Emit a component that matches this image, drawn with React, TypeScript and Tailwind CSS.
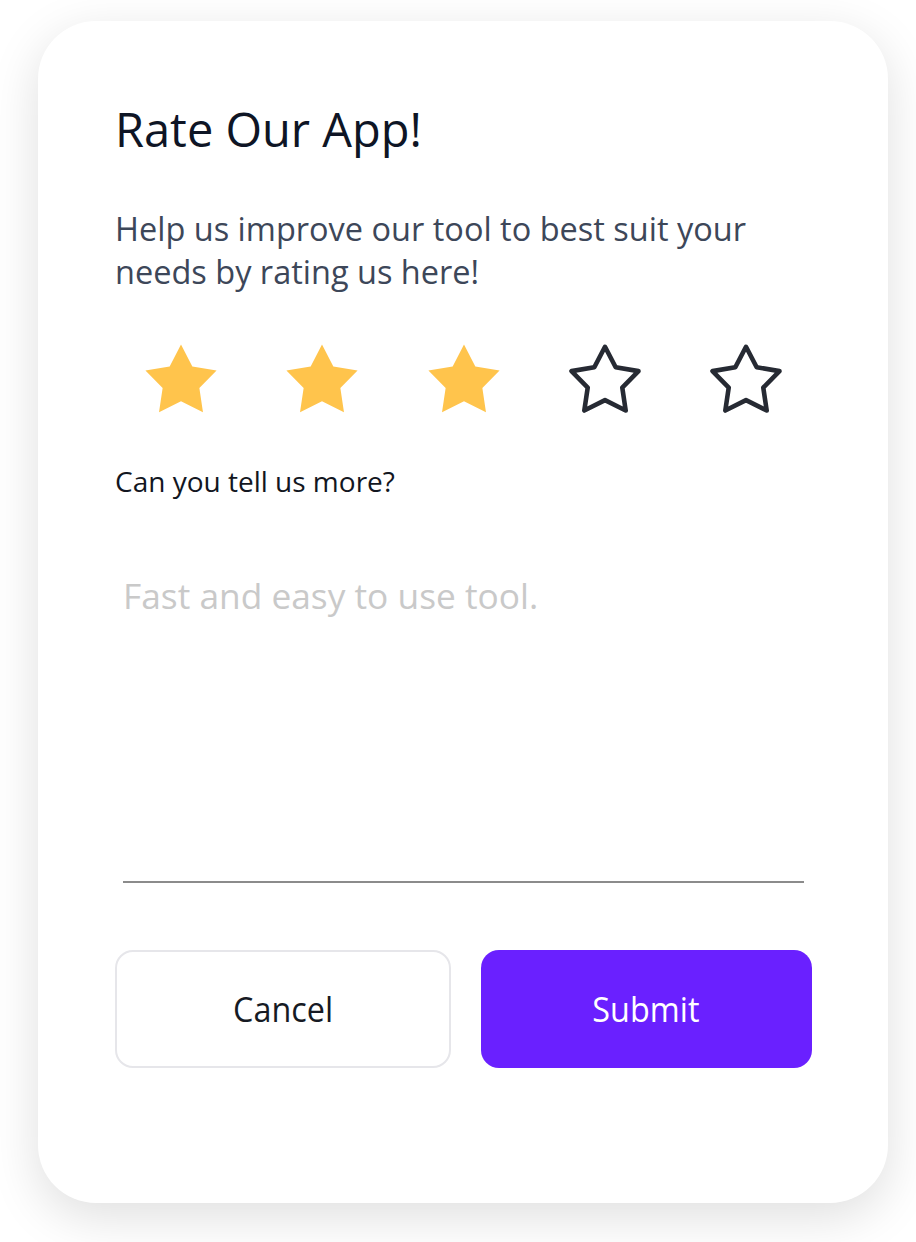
import React from "react";

const STAR_POINTS =
  "0,-37.4 11.34,-15.61 35.57,-11.56 18.36,5.96 21.98,30.26 0,19.3 -21.98,30.26 -18.36,5.96 -35.57,-11.56 -11.34,-15.61";

const OUTLINE_POINTS =
  "0,-35.2 10.67,-14.69 33.48,-10.88 17.28,5.61 20.69,28.48 0,18.17 -20.69,28.48 -17.28,5.61 -33.48,-10.88 -10.67,-14.69";

function Star({ filled }: { filled: boolean }) {
  return (
    <svg width="72" height="69" viewBox="-36 -38 72 69" aria-hidden="true">
      {filled ? (
        <polygon points={STAR_POINTS} fill="#FFC44C" />
      ) : (
        <polygon
          points={OUTLINE_POINTS}
          fill="none"
          stroke="#262A33"
          strokeWidth="4.6"
          strokeLinejoin="round"
        />
      )}
    </svg>
  );
}

export default function App() {
  const rating = 3;
  return (
    <div className="min-h-screen bg-white pl-[38px] pr-[28px] pt-[21px] pb-[39px] font-['Open_Sans',sans-serif]">
      <div className="w-[850px] h-[1182px] rounded-[58px] bg-white shadow-[0_14px_50px_rgba(0,0,0,0.13)] pl-[77px] pr-[76px] pt-[80px]">
        <h1 className="text-[47px] leading-[56px] font-normal text-[#0e1525]">Rate Our App!</h1>
        <p className="mt-[50px] text-[32.5px] leading-[43px] text-[#3d4759]">
          Help us improve our tool to best suit your needs by rating us here!
        </p>
        <div className="mt-[51px] flex justify-between px-[30px]">
          {[1, 2, 3, 4, 5].map((i) => (
            <button key={i} type="button" className="block" aria-label={`${i} stars`}>
              <Star filled={i <= rating} />
            </button>
          ))}
        </div>
        <label className="mt-[50px] block text-[28px] leading-[36px] font-medium text-[#121621]">
          Can you tell us more?
        </label>
        <textarea
          className="mt-[72px] mx-2 block w-[681px] h-[312px] resize-none p-0 border-0 border-b-2 border-[#8b8b8b] bg-transparent text-[35.3px] leading-[48px] text-[#333] outline-none placeholder:text-[#c9c9c9]"
          placeholder="Fast and easy to use tool."
        />
        <div className="mt-[67px] flex gap-[30px]">
          <button
            type="button"
            className="h-[118px] flex-1 flex items-center justify-center rounded-[18px] border-2 border-[#e6e6ea] bg-white text-[35px] font-medium text-[#161a24]"
          >
            <span className="inline-block scale-x-[0.925]">Cancel</span>
          </button>
          <button
            type="button"
            className="h-[118px] flex-1 flex items-center justify-center rounded-[18px] bg-[#6a20ff] text-[35px] font-normal text-white"
          >
            <span className="inline-block scale-x-[0.925]">Submit</span>
          </button>
        </div>
      </div>
    </div>
  );
}
